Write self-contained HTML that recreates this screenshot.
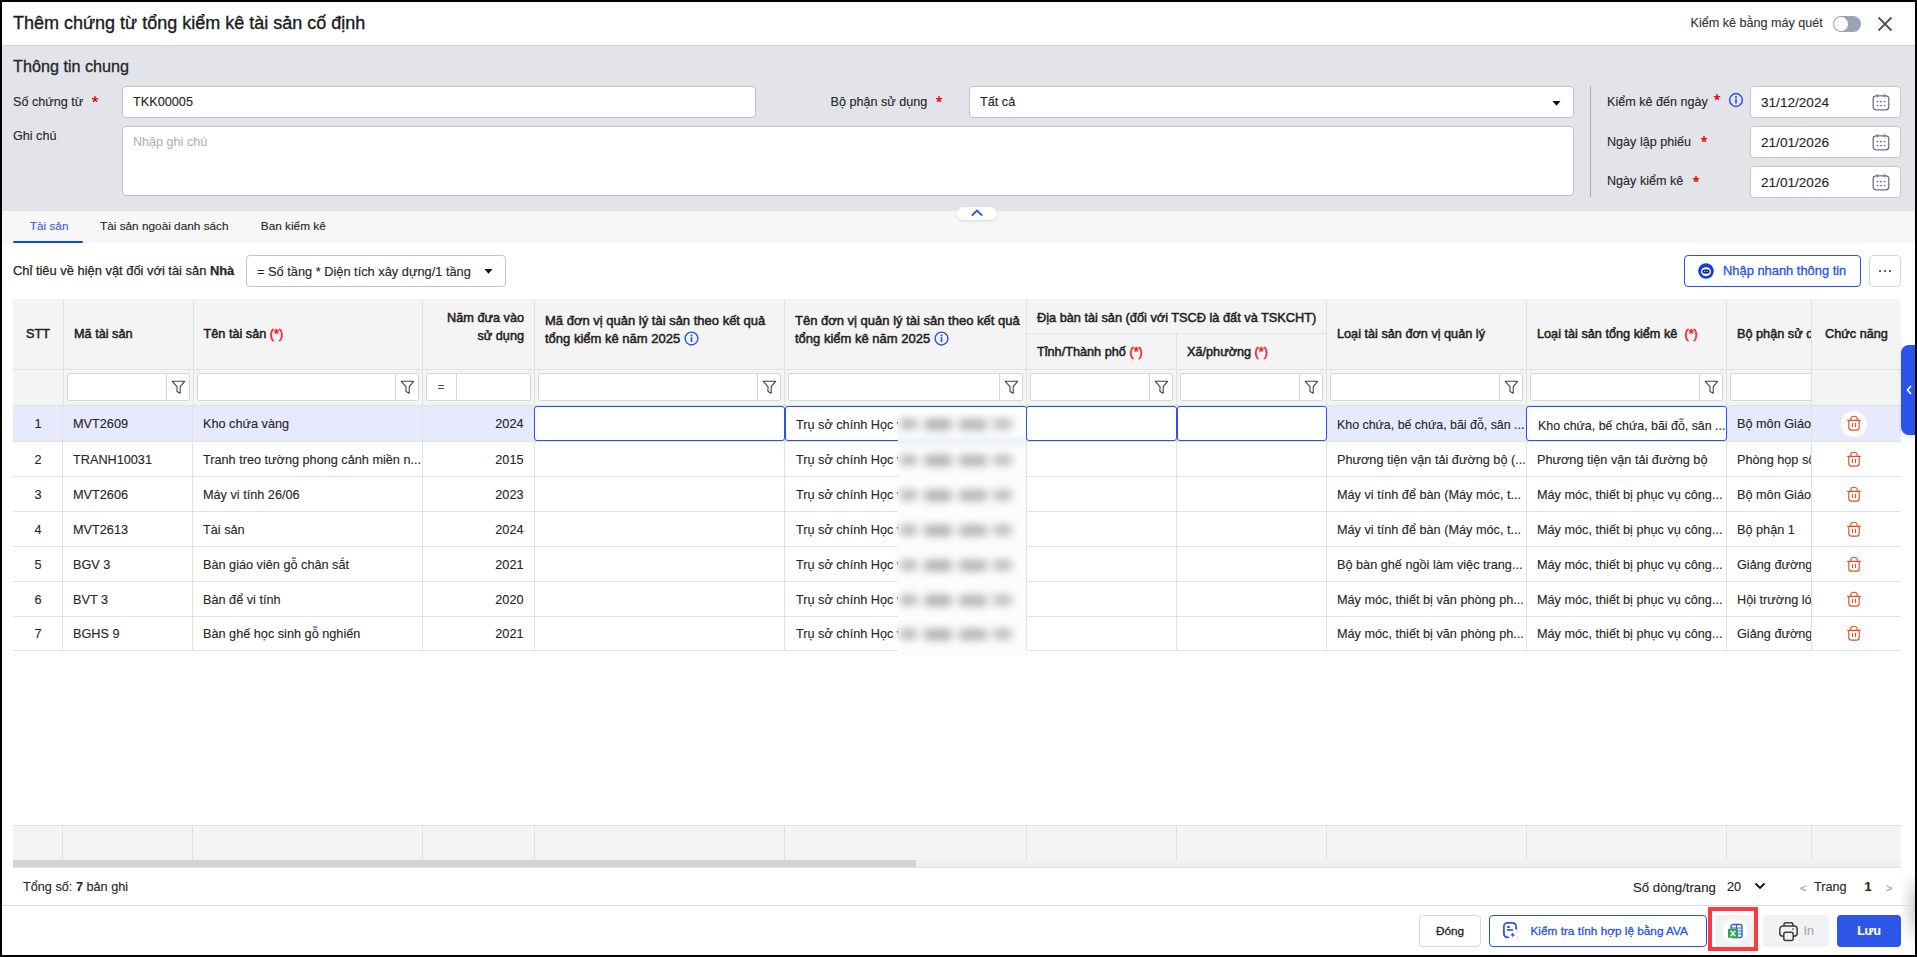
<!DOCTYPE html>
<html><head><meta charset="utf-8"><title>Thêm chứng từ tổng kiểm kê tài sản cố định</title>
<style>
html,body{margin:0;padding:0;}
body{width:1917px;height:957px;position:relative;overflow:hidden;background:#000;font-family:"Liberation Sans", sans-serif;}
.r{position:absolute;}
.t{position:absolute;white-space:pre;-webkit-text-stroke:0.12px currentColor;}
.t b{font-weight:700;}
</style></head><body>
<div class="r" style="left:2px;top:2px;width:1913px;height:953px;background:#fff;"></div>
<div class="t" style="left:13px;top:12.26px;font-size:18px;line-height:23px;color:#1c1c1c;font-weight:400;-webkit-text-stroke:0.35px #1c1c1c;">Thêm chứng từ tổng kiểm kê tài sản cố định</div>
<div class="t" style="left:1690.5px;top:14.63px;font-size:12.6px;line-height:16px;color:#333;font-weight:400;">Kiểm kê bằng máy quét</div>
<div class="r" style="left:1833px;top:16px;width:28px;height:16px;background:#9aa3b8;border-radius:8px;"></div>
<div class="r" style="left:1834px;top:17px;width:14px;height:14px;background:#fff;border-radius:50%;"></div>
<svg class="r" style="left:1876px;top:15px" width="18" height="18" viewBox="0 0 18 18"><path d="M2.5 2.5L15.5 15.5M15.5 2.5L2.5 15.5" stroke="#555" stroke-width="2" stroke-linecap="butt"/></svg>
<div class="r" style="left:2px;top:45px;width:1913px;height:166px;background:#e3e4e9;border-top:1px solid #d3d3d4;box-sizing:border-box;"></div>
<div class="t" style="left:13px;top:55.89px;font-size:16.2px;line-height:21px;color:#262626;font-weight:400;-webkit-text-stroke:0.3px #262626;">Thông tin chung</div>
<div class="t" style="left:13px;top:93.63px;font-size:12.6px;line-height:16px;color:#262626;font-weight:400;">Số chứng từ</div>
<svg class="r" style="left:89.69999999999999px;top:93.8px" width="10" height="10" viewBox="-5 -5 10 10"><path d="M0 0L0 -2.5M0 0L-2.6 -0.35M0 0L2.6 -0.35M0 0L-1.45 2.35M0 0L1.45 2.35" stroke="#ff0000" stroke-width="1.4" stroke-linecap="round"/></svg>
<div class="r" style="left:122px;top:86px;width:634px;height:32px;background:#fff;border:1px solid #c2c2c2;border-radius:4px;box-sizing:border-box;"></div>
<div class="t" style="left:133px;top:94.10px;font-size:12.7px;line-height:17px;color:#262626;font-weight:400;">TKK00005</div>
<div class="t" style="left:13px;top:127.63px;font-size:12.6px;line-height:16px;color:#262626;font-weight:400;">Ghi chú</div>
<div class="r" style="left:122px;top:126px;width:1452px;height:70px;background:#fff;border:1px solid #c2c2c2;border-radius:4px;box-sizing:border-box;"></div>
<div class="t" style="left:133px;top:134.13px;font-size:12.6px;line-height:16px;color:#b3b3b3;font-weight:400;">Nhập ghi chú</div>
<div class="t" style="left:830.5px;top:93.63px;font-size:12.6px;line-height:16px;color:#262626;font-weight:400;">Bộ phận sử dụng</div>
<svg class="r" style="left:933.6px;top:93.8px" width="10" height="10" viewBox="-5 -5 10 10"><path d="M0 0L0 -2.5M0 0L-2.6 -0.35M0 0L2.6 -0.35M0 0L-1.45 2.35M0 0L1.45 2.35" stroke="#ff0000" stroke-width="1.4" stroke-linecap="round"/></svg>
<div class="r" style="left:969px;top:86px;width:605px;height:32px;background:#fff;border:1px solid #c2c2c2;border-radius:4px;box-sizing:border-box;"></div>
<div class="t" style="left:980px;top:94.10px;font-size:12.7px;line-height:17px;color:#262626;font-weight:400;">Tất cả</div>
<svg class="r" style="left:1552px;top:100px" width="9" height="7" viewBox="0 0 9 7"><path d="M0.5 1H8.5L4.5 5.8Z" fill="#111"/></svg>
<div class="r" style="left:1590px;top:86px;width:1px;height:111px;background:#a9a9a9;"></div>
<div class="t" style="left:1607px;top:93.63px;font-size:12.6px;line-height:16px;color:#262626;font-weight:400;">Kiểm kê đến ngày</div>
<svg class="r" style="left:1712.1px;top:91.5px" width="10" height="10" viewBox="-5 -5 10 10"><path d="M0 0L0 -2.5M0 0L-2.6 -0.35M0 0L2.6 -0.35M0 0L-1.45 2.35M0 0L1.45 2.35" stroke="#ff0000" stroke-width="1.4" stroke-linecap="round"/></svg>
<svg class="r" style="left:1728px;top:92px" width="16" height="16" viewBox="0 0 16 16"><circle cx="8" cy="8" r="6.4" fill="none" stroke="#2f55e8" stroke-width="1.5"/><circle cx="8" cy="5" r="1.05" fill="#2f55e8"/><rect x="7.15" y="6.7" width="1.7" height="4.8" fill="#2f55e8"/></svg>
<div class="t" style="left:1607px;top:133.63px;font-size:12.6px;line-height:16px;color:#262626;font-weight:400;">Ngày lập phiếu</div>
<svg class="r" style="left:1699.1px;top:133.8px" width="10" height="10" viewBox="-5 -5 10 10"><path d="M0 0L0 -2.5M0 0L-2.6 -0.35M0 0L2.6 -0.35M0 0L-1.45 2.35M0 0L1.45 2.35" stroke="#ff0000" stroke-width="1.4" stroke-linecap="round"/></svg>
<div class="t" style="left:1607px;top:173.13px;font-size:12.6px;line-height:16px;color:#262626;font-weight:400;">Ngày kiểm kê</div>
<svg class="r" style="left:1691.1px;top:173.5px" width="10" height="10" viewBox="-5 -5 10 10"><path d="M0 0L0 -2.5M0 0L-2.6 -0.35M0 0L2.6 -0.35M0 0L-1.45 2.35M0 0L1.45 2.35" stroke="#ff0000" stroke-width="1.4" stroke-linecap="round"/></svg>
<div class="r" style="left:1750px;top:86px;width:151px;height:32px;background:#fff;border:1px solid #c8c8c8;border-radius:4px;box-sizing:border-box;"></div>
<div class="t" style="left:1761px;top:94.09px;font-size:13.6px;line-height:18px;color:#262626;font-weight:400;">31/12/2024</div>
<svg class="r" style="left:1871px;top:92px" width="20" height="20" viewBox="0 0 20 20"><rect x="2.2" y="3.8" width="15.6" height="14" rx="3" fill="none" stroke="#69728a" stroke-width="1.3"/><path d="M6.5 2.2V5.2M13.5 2.2V5.2" stroke="#69728a" stroke-width="1.3"/><g fill="#69728a"><rect x="5.6" y="9" width="1.8" height="1.2"/><rect x="9.1" y="9" width="1.8" height="1.2"/><rect x="12.6" y="9" width="1.8" height="1.2"/><rect x="5.6" y="13" width="1.8" height="1.2"/><rect x="9.1" y="13" width="1.8" height="1.2"/><rect x="12.6" y="13" width="1.8" height="1.2"/></g></svg>
<div class="r" style="left:1750px;top:126px;width:151px;height:32px;background:#fff;border:1px solid #c8c8c8;border-radius:4px;box-sizing:border-box;"></div>
<div class="t" style="left:1761px;top:134.09px;font-size:13.6px;line-height:18px;color:#262626;font-weight:400;">21/01/2026</div>
<svg class="r" style="left:1871px;top:132px" width="20" height="20" viewBox="0 0 20 20"><rect x="2.2" y="3.8" width="15.6" height="14" rx="3" fill="none" stroke="#69728a" stroke-width="1.3"/><path d="M6.5 2.2V5.2M13.5 2.2V5.2" stroke="#69728a" stroke-width="1.3"/><g fill="#69728a"><rect x="5.6" y="9" width="1.8" height="1.2"/><rect x="9.1" y="9" width="1.8" height="1.2"/><rect x="12.6" y="9" width="1.8" height="1.2"/><rect x="5.6" y="13" width="1.8" height="1.2"/><rect x="9.1" y="13" width="1.8" height="1.2"/><rect x="12.6" y="13" width="1.8" height="1.2"/></g></svg>
<div class="r" style="left:1750px;top:166px;width:151px;height:32px;background:#fff;border:1px solid #c8c8c8;border-radius:4px;box-sizing:border-box;"></div>
<div class="t" style="left:1761px;top:174.09px;font-size:13.6px;line-height:18px;color:#262626;font-weight:400;">21/01/2026</div>
<svg class="r" style="left:1871px;top:172px" width="20" height="20" viewBox="0 0 20 20"><rect x="2.2" y="3.8" width="15.6" height="14" rx="3" fill="none" stroke="#69728a" stroke-width="1.3"/><path d="M6.5 2.2V5.2M13.5 2.2V5.2" stroke="#69728a" stroke-width="1.3"/><g fill="#69728a"><rect x="5.6" y="9" width="1.8" height="1.2"/><rect x="9.1" y="9" width="1.8" height="1.2"/><rect x="12.6" y="9" width="1.8" height="1.2"/><rect x="5.6" y="13" width="1.8" height="1.2"/><rect x="9.1" y="13" width="1.8" height="1.2"/><rect x="12.6" y="13" width="1.8" height="1.2"/></g></svg>
<div class="r" style="left:2px;top:211px;width:1913px;height:32px;background:#f7f7f7;"></div>
<div class="t" style="left:29.8px;top:219.41px;font-size:11.8px;line-height:15px;color:#3e5cf0;font-weight:400;">Tài sản</div>
<div class="t" style="left:100px;top:219.41px;font-size:11.8px;line-height:15px;color:#262626;font-weight:400;">Tài sản ngoài danh sách</div>
<div class="t" style="left:260.8px;top:219.41px;font-size:11.8px;line-height:15px;color:#262626;font-weight:400;">Ban kiểm kê</div>
<div class="r" style="left:13px;top:241px;width:70px;height:2px;background:#1442e8;border-radius:1px;"></div>
<div class="r" style="left:957px;top:207px;width:40px;height:13px;background:#fff;border-radius:7px;box-shadow:0 1px 3px rgba(0,0,0,0.12);"></div>
<svg class="r" style="left:970px;top:208px" width="14" height="10" viewBox="0 0 14 10"><path d="M1.8 7.6L7 2.6L12.2 7.6" fill="none" stroke="#1f4fe8" stroke-width="1.8"/></svg>
<div class="t" style="left:13px;top:261.73px;font-size:12.9px;line-height:17px;color:#262626;font-weight:400;-webkit-text-stroke:0.25px #262626;">Chỉ tiêu về hiện vật đối với tài sản <b>Nhà</b></div>
<div class="r" style="left:246px;top:255px;width:260px;height:32px;background:#fff;border:1px solid #c2c2c2;border-radius:4px;box-sizing:border-box;"></div>
<div class="t" style="left:257px;top:262.76px;font-size:12.8px;line-height:17px;color:#262626;font-weight:400;">= Số tầng * Diện tích xây dựng/1 tầng</div>
<svg class="r" style="left:484px;top:268px" width="9" height="7" viewBox="0 0 9 7"><path d="M0.5 1H8.5L4.5 5.8Z" fill="#111"/></svg>
<div class="r" style="left:1684px;top:255px;width:177px;height:32px;background:#fff;border:1px solid #2a52e6;border-radius:4px;box-sizing:border-box;"></div>
<svg class="r" style="left:1698px;top:263px" width="16" height="16" viewBox="0 0 16 16"><circle cx="8" cy="8" r="7.8" fill="#0f3fe0"/><ellipse cx="8" cy="8.6" rx="5" ry="4.4" fill="#fff"/><ellipse cx="8" cy="8.5" rx="3.6" ry="2.2" fill="#0a1a6a"/><circle cx="6.7" cy="8.4" r="0.8" fill="#9fb4ff"/><circle cx="9.3" cy="8.4" r="0.8" fill="#9fb4ff"/></svg>
<div class="t" style="left:1723px;top:262.03px;font-size:12.9px;line-height:17px;color:#2a52e6;font-weight:400;-webkit-text-stroke:0.3px #2a52e6;">Nhập nhanh thông tin</div>
<div class="r" style="left:1869px;top:255px;width:32px;height:32px;background:#fff;border:1px solid #d3d6dc;border-radius:4px;box-sizing:border-box;"></div>
<div class="r" style="left:1879px;top:270px;width:2px;height:2px;background:#333;border-radius:1px;"></div>
<div class="r" style="left:1884px;top:270px;width:2px;height:2px;background:#333;border-radius:1px;"></div>
<div class="r" style="left:1889px;top:270px;width:2px;height:2px;background:#333;border-radius:1px;"></div>
<div class="r" style="left:13px;top:299px;width:1888px;height:106px;background:#f4f4f4;"></div>
<div class="r" style="left:13px;top:369px;width:1888px;height:1px;background:#e1e1e1;"></div>
<div class="r" style="left:13px;top:405px;width:1888px;height:1px;background:#e1e1e1;"></div>
<div class="r" style="left:1026px;top:333px;width:301px;height:1px;background:#e1e1e1;"></div>
<div class="r" style="left:63px;top:299px;width:1px;height:106px;background:#e1e1e1;"></div>
<div class="r" style="left:193px;top:299px;width:1px;height:106px;background:#e1e1e1;"></div>
<div class="r" style="left:422px;top:299px;width:1px;height:106px;background:#e1e1e1;"></div>
<div class="r" style="left:534px;top:299px;width:1px;height:106px;background:#e1e1e1;"></div>
<div class="r" style="left:784px;top:299px;width:1px;height:106px;background:#e1e1e1;"></div>
<div class="r" style="left:1026px;top:299px;width:1px;height:106px;background:#e1e1e1;"></div>
<div class="r" style="left:1176px;top:334px;width:1px;height:71px;background:#e1e1e1;"></div>
<div class="r" style="left:1326px;top:299px;width:1px;height:106px;background:#e1e1e1;"></div>
<div class="r" style="left:1526px;top:299px;width:1px;height:106px;background:#e1e1e1;"></div>
<div class="r" style="left:1726px;top:299px;width:1px;height:106px;background:#e1e1e1;"></div>
<div class="r" style="left:1811px;top:299px;width:1px;height:106px;background:#e1e1e1;"></div>
<div class="t" style="left:-262px;width:600px;text-align:center;top:326.30px;font-size:12.7px;line-height:17px;color:#222;font-weight:400;-webkit-text-stroke:0.5px #222;">STT</div>
<div class="t" style="left:74px;top:326.30px;font-size:12.7px;line-height:17px;color:#222;font-weight:400;-webkit-text-stroke:0.5px #222;">Mã tài sản</div>
<div class="t" style="left:203.5px;top:326.30px;font-size:12.7px;line-height:17px;color:#222;font-weight:400;-webkit-text-stroke:0.5px #222;">Tên tài sản <span style="color:#f0141e;-webkit-text-stroke-color:#f0141e">(*)</span></div>
<div class="t" style="left:-76px;width:600px;text-align:right;top:309.90px;font-size:12.7px;line-height:17px;color:#222;font-weight:400;-webkit-text-stroke:0.5px #222;">Năm đưa vào</div>
<div class="t" style="left:-76px;width:600px;text-align:right;top:327.90px;font-size:12.7px;line-height:17px;color:#222;font-weight:400;-webkit-text-stroke:0.5px #222;">sử dụng</div>
<div class="t" style="left:545px;top:311.50px;font-size:13px;line-height:17px;color:#222;font-weight:400;-webkit-text-stroke:0.5px #222;">Mã đơn vị quản lý tài sản theo kết quả</div>
<div class="t" style="left:545px;top:329.80px;font-size:13px;line-height:17px;color:#222;font-weight:400;-webkit-text-stroke:0.5px #222;">tổng kiểm kê năm 2025<svg style="display:inline-block;vertical-align:-3px;margin-left:4px;-webkit-text-stroke:0" width="15" height="15" viewBox="0 0 15 15"><circle cx="7.5" cy="7.5" r="6.4" fill="none" stroke="#2f55e8" stroke-width="1.45"/><circle cx="7.5" cy="4.5" r="1.05" fill="#2f55e8"/><rect x="6.65" y="6.2" width="1.7" height="4.8" fill="#2f55e8"/></svg></div>
<div class="t" style="left:795px;top:311.50px;font-size:13px;line-height:17px;color:#222;font-weight:400;-webkit-text-stroke:0.5px #222;">Tên đơn vị quản lý tài sản theo kết quả</div>
<div class="t" style="left:795px;top:329.80px;font-size:13px;line-height:17px;color:#222;font-weight:400;-webkit-text-stroke:0.5px #222;">tổng kiểm kê năm 2025<svg style="display:inline-block;vertical-align:-3px;margin-left:4px;-webkit-text-stroke:0" width="15" height="15" viewBox="0 0 15 15"><circle cx="7.5" cy="7.5" r="6.4" fill="none" stroke="#2f55e8" stroke-width="1.45"/><circle cx="7.5" cy="4.5" r="1.05" fill="#2f55e8"/><rect x="6.65" y="6.2" width="1.7" height="4.8" fill="#2f55e8"/></svg></div>
<div class="t" style="left:1037px;top:308.58px;font-size:12.75px;line-height:17px;color:#222;font-weight:400;-webkit-text-stroke:0.5px #222;">Địa bàn tài sản (đối với TSCĐ là đất và TSKCHT)</div>
<div class="t" style="left:1037px;top:343.90px;font-size:12.7px;line-height:17px;color:#222;font-weight:400;-webkit-text-stroke:0.5px #222;">Tỉnh/Thành phố <span style="color:#f0141e;-webkit-text-stroke-color:#f0141e">(*)</span></div>
<div class="t" style="left:1187px;top:343.90px;font-size:12.7px;line-height:17px;color:#222;font-weight:400;-webkit-text-stroke:0.5px #222;">Xã/phường <span style="color:#f0141e;-webkit-text-stroke-color:#f0141e">(*)</span></div>
<div class="t" style="left:1337px;top:325.90px;font-size:12.7px;line-height:17px;color:#222;font-weight:400;-webkit-text-stroke:0.5px #222;">Loại tài sản đơn vị quản lý</div>
<div class="t" style="left:1537px;top:325.90px;font-size:12.7px;line-height:17px;color:#222;font-weight:400;-webkit-text-stroke:0.5px #222;">Loại tài sản tổng kiểm kê &nbsp;<span style="color:#f0141e;-webkit-text-stroke-color:#f0141e">(*)</span></div>
<div class="t" style="left:1737px;width:74px;overflow:hidden;top:325.90px;font-size:12.7px;line-height:17px;color:#222;font-weight:400;-webkit-text-stroke:0.5px #222;white-space:nowrap;">Bộ phận sử dụng</div>
<div class="t" style="left:1556.5px;width:600px;text-align:center;top:325.90px;font-size:12.7px;line-height:17px;color:#222;font-weight:400;-webkit-text-stroke:0.5px #222;">Chức năng</div>
<div class="r" style="left:67px;top:373px;width:123px;height:28px;background:#fff;border:1px solid #d6d6d6;border-radius:2px;box-sizing:border-box;"></div>
<div class="r" style="left:166px;top:373px;width:1px;height:28px;background:#d6d6d6;"></div>
<svg class="r" style="left:170.5px;top:380px" width="15" height="15" viewBox="0 0 15 15"><path d="M1.2 1.3H13.6L9.2 6.6V13.2L6 11.4V6.6Z" fill="none" stroke="#444" stroke-width="1.1" stroke-linejoin="round"/></svg>
<div class="r" style="left:197px;top:373px;width:222px;height:28px;background:#fff;border:1px solid #d6d6d6;border-radius:2px;box-sizing:border-box;"></div>
<div class="r" style="left:395px;top:373px;width:1px;height:28px;background:#d6d6d6;"></div>
<svg class="r" style="left:399.5px;top:380px" width="15" height="15" viewBox="0 0 15 15"><path d="M1.2 1.3H13.6L9.2 6.6V13.2L6 11.4V6.6Z" fill="none" stroke="#444" stroke-width="1.1" stroke-linejoin="round"/></svg>
<div class="r" style="left:426px;top:373px;width:105px;height:28px;background:#fff;border:1px solid #d6d6d6;border-radius:2px;box-sizing:border-box;"></div>
<div class="r" style="left:456px;top:373px;width:1px;height:28px;background:#d6d6d6;"></div>
<div class="t" style="left:141px;width:600px;text-align:center;top:380.19px;font-size:11px;line-height:14px;color:#444;font-weight:400;">=</div>
<div class="r" style="left:538px;top:373px;width:243px;height:28px;background:#fff;border:1px solid #d6d6d6;border-radius:2px;box-sizing:border-box;"></div>
<div class="r" style="left:757px;top:373px;width:1px;height:28px;background:#d6d6d6;"></div>
<svg class="r" style="left:761.5px;top:380px" width="15" height="15" viewBox="0 0 15 15"><path d="M1.2 1.3H13.6L9.2 6.6V13.2L6 11.4V6.6Z" fill="none" stroke="#444" stroke-width="1.1" stroke-linejoin="round"/></svg>
<div class="r" style="left:788px;top:373px;width:235px;height:28px;background:#fff;border:1px solid #d6d6d6;border-radius:2px;box-sizing:border-box;"></div>
<div class="r" style="left:999px;top:373px;width:1px;height:28px;background:#d6d6d6;"></div>
<svg class="r" style="left:1003.5px;top:380px" width="15" height="15" viewBox="0 0 15 15"><path d="M1.2 1.3H13.6L9.2 6.6V13.2L6 11.4V6.6Z" fill="none" stroke="#444" stroke-width="1.1" stroke-linejoin="round"/></svg>
<div class="r" style="left:1030px;top:373px;width:143px;height:28px;background:#fff;border:1px solid #d6d6d6;border-radius:2px;box-sizing:border-box;"></div>
<div class="r" style="left:1149px;top:373px;width:1px;height:28px;background:#d6d6d6;"></div>
<svg class="r" style="left:1153.5px;top:380px" width="15" height="15" viewBox="0 0 15 15"><path d="M1.2 1.3H13.6L9.2 6.6V13.2L6 11.4V6.6Z" fill="none" stroke="#444" stroke-width="1.1" stroke-linejoin="round"/></svg>
<div class="r" style="left:1180px;top:373px;width:143px;height:28px;background:#fff;border:1px solid #d6d6d6;border-radius:2px;box-sizing:border-box;"></div>
<div class="r" style="left:1299px;top:373px;width:1px;height:28px;background:#d6d6d6;"></div>
<svg class="r" style="left:1303.5px;top:380px" width="15" height="15" viewBox="0 0 15 15"><path d="M1.2 1.3H13.6L9.2 6.6V13.2L6 11.4V6.6Z" fill="none" stroke="#444" stroke-width="1.1" stroke-linejoin="round"/></svg>
<div class="r" style="left:1330px;top:373px;width:193px;height:28px;background:#fff;border:1px solid #d6d6d6;border-radius:2px;box-sizing:border-box;"></div>
<div class="r" style="left:1499px;top:373px;width:1px;height:28px;background:#d6d6d6;"></div>
<svg class="r" style="left:1503.5px;top:380px" width="15" height="15" viewBox="0 0 15 15"><path d="M1.2 1.3H13.6L9.2 6.6V13.2L6 11.4V6.6Z" fill="none" stroke="#444" stroke-width="1.1" stroke-linejoin="round"/></svg>
<div class="r" style="left:1530px;top:373px;width:193px;height:28px;background:#fff;border:1px solid #d6d6d6;border-radius:2px;box-sizing:border-box;"></div>
<div class="r" style="left:1699px;top:373px;width:1px;height:28px;background:#d6d6d6;"></div>
<svg class="r" style="left:1703.5px;top:380px" width="15" height="15" viewBox="0 0 15 15"><path d="M1.2 1.3H13.6L9.2 6.6V13.2L6 11.4V6.6Z" fill="none" stroke="#444" stroke-width="1.1" stroke-linejoin="round"/></svg>
<div class="r" style="left:1730px;top:373px;width:81px;height:28px;background:#fff;border:1px solid #d6d6d6;border-right:none;border-radius:2px 0 0 2px;box-sizing:border-box;"></div>
<div class="r" style="left:13px;top:406px;width:1888px;height:35px;background:#e7eafc;"></div>
<div class="r" style="left:13px;top:441px;width:1888px;height:1px;background:#e1e1e1;"></div>
<div class="r" style="left:62px;top:406px;width:1px;height:35px;background:#e1e1e1;"></div>
<div class="r" style="left:192px;top:406px;width:1px;height:35px;background:#e1e1e1;"></div>
<div class="r" style="left:422px;top:406px;width:1px;height:35px;background:#e1e1e1;"></div>
<div class="r" style="left:534px;top:406px;width:1px;height:35px;background:#e1e1e1;"></div>
<div class="r" style="left:784px;top:406px;width:1px;height:35px;background:#e1e1e1;"></div>
<div class="r" style="left:1026px;top:406px;width:1px;height:35px;background:#e1e1e1;"></div>
<div class="r" style="left:1176px;top:406px;width:1px;height:35px;background:#e1e1e1;"></div>
<div class="r" style="left:1326px;top:406px;width:1px;height:35px;background:#e1e1e1;"></div>
<div class="r" style="left:1526px;top:406px;width:1px;height:35px;background:#e1e1e1;"></div>
<div class="r" style="left:1726px;top:406px;width:1px;height:35px;background:#e1e1e1;"></div>
<div class="r" style="left:1811px;top:406px;width:1px;height:35px;background:#e1e1e1;"></div>
<div class="r" style="left:534px;top:406px;width:251px;height:35px;border:1.5px solid #2a52e6;border-radius:3px;box-sizing:border-box;background:#fff;"></div>
<div class="r" style="left:785px;top:406px;width:242px;height:35px;border:1.5px solid #2a52e6;border-radius:3px;box-sizing:border-box;background:#fff;"></div>
<div class="r" style="left:1026px;top:406px;width:151px;height:35px;border:1.5px solid #2a52e6;border-radius:3px;box-sizing:border-box;background:#fff;"></div>
<div class="r" style="left:1177px;top:406px;width:150px;height:35px;border:1.5px solid #2a52e6;border-radius:3px;box-sizing:border-box;background:#fff;"></div>
<div class="r" style="left:1526px;top:406px;width:201px;height:35px;border:1.5px solid #2a52e6;border-radius:3px;box-sizing:border-box;background:#fff;"></div>
<div class="t" style="left:-262px;width:600px;text-align:center;top:416.30px;font-size:12.7px;line-height:17px;color:#262626;font-weight:400;">1</div>
<div class="t" style="left:73px;top:416.30px;font-size:12.7px;line-height:17px;color:#262626;font-weight:400;">MVT2609</div>
<div class="t" style="left:203px;top:416.30px;font-size:12.7px;line-height:17px;color:#262626;font-weight:400;">Kho chứa vàng</div>
<div class="t" style="left:-76.5px;width:600px;text-align:right;top:416.30px;font-size:12.7px;line-height:17px;color:#262626;font-weight:400;">2024</div>
<div class="t" style="left:796px;top:417.10px;font-size:12.7px;line-height:17px;color:#262626;font-weight:400;">Trụ sở chính Học v</div>
<div class="t" style="left:1337px;top:416.90px;font-size:12.4px;line-height:16px;color:#262626;font-weight:400;">Kho chứa, bế chứa, bãi đỗ, sân ...</div>
<div class="t" style="left:1538px;top:417.70px;font-size:12.4px;line-height:16px;color:#262626;font-weight:400;">Kho chứa, bế chứa, bãi đỗ, sân ...</div>
<div class="t" style="left:1737px;width:74px;overflow:hidden;top:416.30px;font-size:12.7px;line-height:17px;color:#262626;font-weight:400;white-space:nowrap;">Bộ môn Giáo dục</div>
<div class="r" style="left:1841px;top:411px;width:26px;height:26px;background:#fff;border-radius:50%;"></div>
<svg class="r" style="left:1845px;top:414.2px" width="18" height="18" viewBox="0 0 18 18"><g fill="none" stroke="#e24e25"><path d="M5.7 6.4V5.2A3 3 0 0 1 8.7 2.2H9.3A3 3 0 0 1 12.3 5.2V6.4" stroke-width="1.15"/><path d="M2.2 6.4H15.8" stroke-width="1.3"/><path d="M3.8 6.4V13.5A2.6 2.6 0 0 0 6.4 16.1H11.6A2.6 2.6 0 0 0 14.2 13.5V6.4" stroke-width="1.15"/><path d="M7.5 9.3V12.5M10.5 9.3V12.5" stroke-width="1.15" stroke-linecap="round"/></g></svg>
<div class="r" style="left:13px;top:476px;width:1888px;height:1px;background:#e1e1e1;"></div>
<div class="r" style="left:62px;top:442px;width:1px;height:34px;background:#e1e1e1;"></div>
<div class="r" style="left:192px;top:442px;width:1px;height:34px;background:#e1e1e1;"></div>
<div class="r" style="left:422px;top:442px;width:1px;height:34px;background:#e1e1e1;"></div>
<div class="r" style="left:534px;top:442px;width:1px;height:34px;background:#e1e1e1;"></div>
<div class="r" style="left:784px;top:442px;width:1px;height:34px;background:#e1e1e1;"></div>
<div class="r" style="left:1026px;top:442px;width:1px;height:34px;background:#e1e1e1;"></div>
<div class="r" style="left:1176px;top:442px;width:1px;height:34px;background:#e1e1e1;"></div>
<div class="r" style="left:1326px;top:442px;width:1px;height:34px;background:#e1e1e1;"></div>
<div class="r" style="left:1526px;top:442px;width:1px;height:34px;background:#e1e1e1;"></div>
<div class="r" style="left:1726px;top:442px;width:1px;height:34px;background:#e1e1e1;"></div>
<div class="r" style="left:1811px;top:442px;width:1px;height:34px;background:#e1e1e1;"></div>
<div class="t" style="left:-262px;width:600px;text-align:center;top:451.60px;font-size:12.7px;line-height:17px;color:#262626;font-weight:400;">2</div>
<div class="t" style="left:73px;top:451.60px;font-size:12.7px;line-height:17px;color:#262626;font-weight:400;">TRANH10031</div>
<div class="t" style="left:203px;top:451.60px;font-size:12.7px;line-height:17px;color:#262626;font-weight:400;">Tranh treo tường phong cảnh miền n...</div>
<div class="t" style="left:-76.5px;width:600px;text-align:right;top:451.60px;font-size:12.7px;line-height:17px;color:#262626;font-weight:400;">2015</div>
<div class="t" style="left:796px;top:451.60px;font-size:12.7px;line-height:17px;color:#262626;font-weight:400;">Trụ sở chính Học v</div>
<div class="t" style="left:1337px;top:451.60px;font-size:12.7px;line-height:17px;color:#262626;font-weight:400;">Phương tiện vận tải đường bộ (...</div>
<div class="t" style="left:1537px;top:451.60px;font-size:12.7px;line-height:17px;color:#262626;font-weight:400;">Phương tiện vận tải đường bộ</div>
<div class="t" style="left:1737px;width:74px;overflow:hidden;top:451.60px;font-size:12.7px;line-height:17px;color:#262626;font-weight:400;white-space:nowrap;">Phòng họp số 1</div>
<svg class="r" style="left:1845px;top:450px" width="18" height="18" viewBox="0 0 18 18"><g fill="none" stroke="#e24e25"><path d="M5.7 6.4V5.2A3 3 0 0 1 8.7 2.2H9.3A3 3 0 0 1 12.3 5.2V6.4" stroke-width="1.15"/><path d="M2.2 6.4H15.8" stroke-width="1.3"/><path d="M3.8 6.4V13.5A2.6 2.6 0 0 0 6.4 16.1H11.6A2.6 2.6 0 0 0 14.2 13.5V6.4" stroke-width="1.15"/><path d="M7.5 9.3V12.5M10.5 9.3V12.5" stroke-width="1.15" stroke-linecap="round"/></g></svg>
<div class="r" style="left:13px;top:511px;width:1888px;height:1px;background:#e1e1e1;"></div>
<div class="r" style="left:62px;top:477px;width:1px;height:34px;background:#e1e1e1;"></div>
<div class="r" style="left:192px;top:477px;width:1px;height:34px;background:#e1e1e1;"></div>
<div class="r" style="left:422px;top:477px;width:1px;height:34px;background:#e1e1e1;"></div>
<div class="r" style="left:534px;top:477px;width:1px;height:34px;background:#e1e1e1;"></div>
<div class="r" style="left:784px;top:477px;width:1px;height:34px;background:#e1e1e1;"></div>
<div class="r" style="left:1026px;top:477px;width:1px;height:34px;background:#e1e1e1;"></div>
<div class="r" style="left:1176px;top:477px;width:1px;height:34px;background:#e1e1e1;"></div>
<div class="r" style="left:1326px;top:477px;width:1px;height:34px;background:#e1e1e1;"></div>
<div class="r" style="left:1526px;top:477px;width:1px;height:34px;background:#e1e1e1;"></div>
<div class="r" style="left:1726px;top:477px;width:1px;height:34px;background:#e1e1e1;"></div>
<div class="r" style="left:1811px;top:477px;width:1px;height:34px;background:#e1e1e1;"></div>
<div class="t" style="left:-262px;width:600px;text-align:center;top:486.60px;font-size:12.7px;line-height:17px;color:#262626;font-weight:400;">3</div>
<div class="t" style="left:73px;top:486.60px;font-size:12.7px;line-height:17px;color:#262626;font-weight:400;">MVT2606</div>
<div class="t" style="left:203px;top:486.60px;font-size:12.7px;line-height:17px;color:#262626;font-weight:400;">Máy vi tính 26/06</div>
<div class="t" style="left:-76.5px;width:600px;text-align:right;top:486.60px;font-size:12.7px;line-height:17px;color:#262626;font-weight:400;">2023</div>
<div class="t" style="left:796px;top:486.60px;font-size:12.7px;line-height:17px;color:#262626;font-weight:400;">Trụ sở chính Học v</div>
<div class="t" style="left:1337px;top:486.60px;font-size:12.7px;line-height:17px;color:#262626;font-weight:400;">Máy vi tính để bàn (Máy móc, t...</div>
<div class="t" style="left:1537px;top:486.60px;font-size:12.7px;line-height:17px;color:#262626;font-weight:400;">Máy móc, thiết bị phục vụ công...</div>
<div class="t" style="left:1737px;width:74px;overflow:hidden;top:486.60px;font-size:12.7px;line-height:17px;color:#262626;font-weight:400;white-space:nowrap;">Bộ môn Giáo dục</div>
<svg class="r" style="left:1845px;top:485px" width="18" height="18" viewBox="0 0 18 18"><g fill="none" stroke="#e24e25"><path d="M5.7 6.4V5.2A3 3 0 0 1 8.7 2.2H9.3A3 3 0 0 1 12.3 5.2V6.4" stroke-width="1.15"/><path d="M2.2 6.4H15.8" stroke-width="1.3"/><path d="M3.8 6.4V13.5A2.6 2.6 0 0 0 6.4 16.1H11.6A2.6 2.6 0 0 0 14.2 13.5V6.4" stroke-width="1.15"/><path d="M7.5 9.3V12.5M10.5 9.3V12.5" stroke-width="1.15" stroke-linecap="round"/></g></svg>
<div class="r" style="left:13px;top:546px;width:1888px;height:1px;background:#e1e1e1;"></div>
<div class="r" style="left:62px;top:512px;width:1px;height:34px;background:#e1e1e1;"></div>
<div class="r" style="left:192px;top:512px;width:1px;height:34px;background:#e1e1e1;"></div>
<div class="r" style="left:422px;top:512px;width:1px;height:34px;background:#e1e1e1;"></div>
<div class="r" style="left:534px;top:512px;width:1px;height:34px;background:#e1e1e1;"></div>
<div class="r" style="left:784px;top:512px;width:1px;height:34px;background:#e1e1e1;"></div>
<div class="r" style="left:1026px;top:512px;width:1px;height:34px;background:#e1e1e1;"></div>
<div class="r" style="left:1176px;top:512px;width:1px;height:34px;background:#e1e1e1;"></div>
<div class="r" style="left:1326px;top:512px;width:1px;height:34px;background:#e1e1e1;"></div>
<div class="r" style="left:1526px;top:512px;width:1px;height:34px;background:#e1e1e1;"></div>
<div class="r" style="left:1726px;top:512px;width:1px;height:34px;background:#e1e1e1;"></div>
<div class="r" style="left:1811px;top:512px;width:1px;height:34px;background:#e1e1e1;"></div>
<div class="t" style="left:-262px;width:600px;text-align:center;top:521.60px;font-size:12.7px;line-height:17px;color:#262626;font-weight:400;">4</div>
<div class="t" style="left:73px;top:521.60px;font-size:12.7px;line-height:17px;color:#262626;font-weight:400;">MVT2613</div>
<div class="t" style="left:203px;top:521.60px;font-size:12.7px;line-height:17px;color:#262626;font-weight:400;">Tài sản</div>
<div class="t" style="left:-76.5px;width:600px;text-align:right;top:521.60px;font-size:12.7px;line-height:17px;color:#262626;font-weight:400;">2024</div>
<div class="t" style="left:796px;top:521.60px;font-size:12.7px;line-height:17px;color:#262626;font-weight:400;">Trụ sở chính Học v</div>
<div class="t" style="left:1337px;top:521.60px;font-size:12.7px;line-height:17px;color:#262626;font-weight:400;">Máy vi tính để bàn (Máy móc, t...</div>
<div class="t" style="left:1537px;top:521.60px;font-size:12.7px;line-height:17px;color:#262626;font-weight:400;">Máy móc, thiết bị phục vụ công...</div>
<div class="t" style="left:1737px;width:74px;overflow:hidden;top:521.60px;font-size:12.7px;line-height:17px;color:#262626;font-weight:400;white-space:nowrap;">Bộ phận 1</div>
<svg class="r" style="left:1845px;top:520px" width="18" height="18" viewBox="0 0 18 18"><g fill="none" stroke="#e24e25"><path d="M5.7 6.4V5.2A3 3 0 0 1 8.7 2.2H9.3A3 3 0 0 1 12.3 5.2V6.4" stroke-width="1.15"/><path d="M2.2 6.4H15.8" stroke-width="1.3"/><path d="M3.8 6.4V13.5A2.6 2.6 0 0 0 6.4 16.1H11.6A2.6 2.6 0 0 0 14.2 13.5V6.4" stroke-width="1.15"/><path d="M7.5 9.3V12.5M10.5 9.3V12.5" stroke-width="1.15" stroke-linecap="round"/></g></svg>
<div class="r" style="left:13px;top:581px;width:1888px;height:1px;background:#e1e1e1;"></div>
<div class="r" style="left:62px;top:547px;width:1px;height:34px;background:#e1e1e1;"></div>
<div class="r" style="left:192px;top:547px;width:1px;height:34px;background:#e1e1e1;"></div>
<div class="r" style="left:422px;top:547px;width:1px;height:34px;background:#e1e1e1;"></div>
<div class="r" style="left:534px;top:547px;width:1px;height:34px;background:#e1e1e1;"></div>
<div class="r" style="left:784px;top:547px;width:1px;height:34px;background:#e1e1e1;"></div>
<div class="r" style="left:1026px;top:547px;width:1px;height:34px;background:#e1e1e1;"></div>
<div class="r" style="left:1176px;top:547px;width:1px;height:34px;background:#e1e1e1;"></div>
<div class="r" style="left:1326px;top:547px;width:1px;height:34px;background:#e1e1e1;"></div>
<div class="r" style="left:1526px;top:547px;width:1px;height:34px;background:#e1e1e1;"></div>
<div class="r" style="left:1726px;top:547px;width:1px;height:34px;background:#e1e1e1;"></div>
<div class="r" style="left:1811px;top:547px;width:1px;height:34px;background:#e1e1e1;"></div>
<div class="t" style="left:-262px;width:600px;text-align:center;top:556.60px;font-size:12.7px;line-height:17px;color:#262626;font-weight:400;">5</div>
<div class="t" style="left:73px;top:556.60px;font-size:12.7px;line-height:17px;color:#262626;font-weight:400;">BGV 3</div>
<div class="t" style="left:203px;top:556.60px;font-size:12.7px;line-height:17px;color:#262626;font-weight:400;">Bàn giáo viên gỗ chân sắt</div>
<div class="t" style="left:-76.5px;width:600px;text-align:right;top:556.60px;font-size:12.7px;line-height:17px;color:#262626;font-weight:400;">2021</div>
<div class="t" style="left:796px;top:556.60px;font-size:12.7px;line-height:17px;color:#262626;font-weight:400;">Trụ sở chính Học v</div>
<div class="t" style="left:1337px;top:556.60px;font-size:12.7px;line-height:17px;color:#262626;font-weight:400;">Bộ bàn ghế ngồi làm việc trang...</div>
<div class="t" style="left:1537px;top:556.60px;font-size:12.7px;line-height:17px;color:#262626;font-weight:400;">Máy móc, thiết bị phục vụ công...</div>
<div class="t" style="left:1737px;width:74px;overflow:hidden;top:556.60px;font-size:12.7px;line-height:17px;color:#262626;font-weight:400;white-space:nowrap;">Giảng đường A</div>
<svg class="r" style="left:1845px;top:555px" width="18" height="18" viewBox="0 0 18 18"><g fill="none" stroke="#e24e25"><path d="M5.7 6.4V5.2A3 3 0 0 1 8.7 2.2H9.3A3 3 0 0 1 12.3 5.2V6.4" stroke-width="1.15"/><path d="M2.2 6.4H15.8" stroke-width="1.3"/><path d="M3.8 6.4V13.5A2.6 2.6 0 0 0 6.4 16.1H11.6A2.6 2.6 0 0 0 14.2 13.5V6.4" stroke-width="1.15"/><path d="M7.5 9.3V12.5M10.5 9.3V12.5" stroke-width="1.15" stroke-linecap="round"/></g></svg>
<div class="r" style="left:13px;top:616px;width:1888px;height:1px;background:#e1e1e1;"></div>
<div class="r" style="left:62px;top:582px;width:1px;height:34px;background:#e1e1e1;"></div>
<div class="r" style="left:192px;top:582px;width:1px;height:34px;background:#e1e1e1;"></div>
<div class="r" style="left:422px;top:582px;width:1px;height:34px;background:#e1e1e1;"></div>
<div class="r" style="left:534px;top:582px;width:1px;height:34px;background:#e1e1e1;"></div>
<div class="r" style="left:784px;top:582px;width:1px;height:34px;background:#e1e1e1;"></div>
<div class="r" style="left:1026px;top:582px;width:1px;height:34px;background:#e1e1e1;"></div>
<div class="r" style="left:1176px;top:582px;width:1px;height:34px;background:#e1e1e1;"></div>
<div class="r" style="left:1326px;top:582px;width:1px;height:34px;background:#e1e1e1;"></div>
<div class="r" style="left:1526px;top:582px;width:1px;height:34px;background:#e1e1e1;"></div>
<div class="r" style="left:1726px;top:582px;width:1px;height:34px;background:#e1e1e1;"></div>
<div class="r" style="left:1811px;top:582px;width:1px;height:34px;background:#e1e1e1;"></div>
<div class="t" style="left:-262px;width:600px;text-align:center;top:591.60px;font-size:12.7px;line-height:17px;color:#262626;font-weight:400;">6</div>
<div class="t" style="left:73px;top:591.60px;font-size:12.7px;line-height:17px;color:#262626;font-weight:400;">BVT 3</div>
<div class="t" style="left:203px;top:591.60px;font-size:12.7px;line-height:17px;color:#262626;font-weight:400;">Bàn để vi tính</div>
<div class="t" style="left:-76.5px;width:600px;text-align:right;top:591.60px;font-size:12.7px;line-height:17px;color:#262626;font-weight:400;">2020</div>
<div class="t" style="left:796px;top:591.60px;font-size:12.7px;line-height:17px;color:#262626;font-weight:400;">Trụ sở chính Học v</div>
<div class="t" style="left:1337px;top:591.60px;font-size:12.7px;line-height:17px;color:#262626;font-weight:400;">Máy móc, thiết bị văn phòng ph...</div>
<div class="t" style="left:1537px;top:591.60px;font-size:12.7px;line-height:17px;color:#262626;font-weight:400;">Máy móc, thiết bị phục vụ công...</div>
<div class="t" style="left:1737px;width:74px;overflow:hidden;top:591.60px;font-size:12.7px;line-height:17px;color:#262626;font-weight:400;white-space:nowrap;">Hội trường lớn</div>
<svg class="r" style="left:1845px;top:590px" width="18" height="18" viewBox="0 0 18 18"><g fill="none" stroke="#e24e25"><path d="M5.7 6.4V5.2A3 3 0 0 1 8.7 2.2H9.3A3 3 0 0 1 12.3 5.2V6.4" stroke-width="1.15"/><path d="M2.2 6.4H15.8" stroke-width="1.3"/><path d="M3.8 6.4V13.5A2.6 2.6 0 0 0 6.4 16.1H11.6A2.6 2.6 0 0 0 14.2 13.5V6.4" stroke-width="1.15"/><path d="M7.5 9.3V12.5M10.5 9.3V12.5" stroke-width="1.15" stroke-linecap="round"/></g></svg>
<div class="r" style="left:13px;top:650px;width:1888px;height:1px;background:#e1e1e1;"></div>
<div class="r" style="left:62px;top:617px;width:1px;height:33px;background:#e1e1e1;"></div>
<div class="r" style="left:192px;top:617px;width:1px;height:33px;background:#e1e1e1;"></div>
<div class="r" style="left:422px;top:617px;width:1px;height:33px;background:#e1e1e1;"></div>
<div class="r" style="left:534px;top:617px;width:1px;height:33px;background:#e1e1e1;"></div>
<div class="r" style="left:784px;top:617px;width:1px;height:33px;background:#e1e1e1;"></div>
<div class="r" style="left:1026px;top:617px;width:1px;height:33px;background:#e1e1e1;"></div>
<div class="r" style="left:1176px;top:617px;width:1px;height:33px;background:#e1e1e1;"></div>
<div class="r" style="left:1326px;top:617px;width:1px;height:33px;background:#e1e1e1;"></div>
<div class="r" style="left:1526px;top:617px;width:1px;height:33px;background:#e1e1e1;"></div>
<div class="r" style="left:1726px;top:617px;width:1px;height:33px;background:#e1e1e1;"></div>
<div class="r" style="left:1811px;top:617px;width:1px;height:33px;background:#e1e1e1;"></div>
<div class="t" style="left:-262px;width:600px;text-align:center;top:625.60px;font-size:12.7px;line-height:17px;color:#262626;font-weight:400;">7</div>
<div class="t" style="left:73px;top:625.60px;font-size:12.7px;line-height:17px;color:#262626;font-weight:400;">BGHS 9</div>
<div class="t" style="left:203px;top:625.60px;font-size:12.7px;line-height:17px;color:#262626;font-weight:400;">Bàn ghế học sinh gỗ nghiến</div>
<div class="t" style="left:-76.5px;width:600px;text-align:right;top:625.60px;font-size:12.7px;line-height:17px;color:#262626;font-weight:400;">2021</div>
<div class="t" style="left:796px;top:625.60px;font-size:12.7px;line-height:17px;color:#262626;font-weight:400;">Trụ sở chính Học v</div>
<div class="t" style="left:1337px;top:625.60px;font-size:12.7px;line-height:17px;color:#262626;font-weight:400;">Máy móc, thiết bị văn phòng ph...</div>
<div class="t" style="left:1537px;top:625.60px;font-size:12.7px;line-height:17px;color:#262626;font-weight:400;">Máy móc, thiết bị phục vụ công...</div>
<div class="t" style="left:1737px;width:74px;overflow:hidden;top:625.60px;font-size:12.7px;line-height:17px;color:#262626;font-weight:400;white-space:nowrap;">Giảng đường B</div>
<svg class="r" style="left:1845px;top:624px" width="18" height="18" viewBox="0 0 18 18"><g fill="none" stroke="#e24e25"><path d="M5.7 6.4V5.2A3 3 0 0 1 8.7 2.2H9.3A3 3 0 0 1 12.3 5.2V6.4" stroke-width="1.15"/><path d="M2.2 6.4H15.8" stroke-width="1.3"/><path d="M3.8 6.4V13.5A2.6 2.6 0 0 0 6.4 16.1H11.6A2.6 2.6 0 0 0 14.2 13.5V6.4" stroke-width="1.15"/><path d="M7.5 9.3V12.5M10.5 9.3V12.5" stroke-width="1.15" stroke-linecap="round"/></g></svg>
<div class="r" style="left:898px;top:414px;width:128px;height:241px;background:#fcfcfc;"></div>
<div class="r" style="left:898px;top:410.2px;width:128px;height:26px;filter:blur(4.2px);"><span style="position:absolute;left:2px;top:9px;width:17px;height:10px;background:#b4b4b4;border-radius:4px"></span><span style="position:absolute;left:26px;top:9px;width:28px;height:11px;background:#afafaf;border-radius:4px"></span><span style="position:absolute;left:61px;top:9px;width:28px;height:11px;background:#b2b2b2;border-radius:4px"></span><span style="position:absolute;left:95px;top:9px;width:19px;height:10px;background:#b8b8b8;border-radius:4px"></span></div>
<div class="r" style="left:898px;top:445.5px;width:128px;height:26px;filter:blur(4.2px);"><span style="position:absolute;left:2px;top:9px;width:17px;height:10px;background:#b4b4b4;border-radius:4px"></span><span style="position:absolute;left:26px;top:9px;width:28px;height:11px;background:#afafaf;border-radius:4px"></span><span style="position:absolute;left:61px;top:9px;width:28px;height:11px;background:#b2b2b2;border-radius:4px"></span><span style="position:absolute;left:95px;top:9px;width:19px;height:10px;background:#b8b8b8;border-radius:4px"></span></div>
<div class="r" style="left:898px;top:480.5px;width:128px;height:26px;filter:blur(4.2px);"><span style="position:absolute;left:2px;top:9px;width:17px;height:10px;background:#b4b4b4;border-radius:4px"></span><span style="position:absolute;left:26px;top:9px;width:28px;height:11px;background:#afafaf;border-radius:4px"></span><span style="position:absolute;left:61px;top:9px;width:28px;height:11px;background:#b2b2b2;border-radius:4px"></span><span style="position:absolute;left:95px;top:9px;width:19px;height:10px;background:#b8b8b8;border-radius:4px"></span></div>
<div class="r" style="left:898px;top:515.5px;width:128px;height:26px;filter:blur(4.2px);"><span style="position:absolute;left:2px;top:9px;width:17px;height:10px;background:#b4b4b4;border-radius:4px"></span><span style="position:absolute;left:26px;top:9px;width:28px;height:11px;background:#afafaf;border-radius:4px"></span><span style="position:absolute;left:61px;top:9px;width:28px;height:11px;background:#b2b2b2;border-radius:4px"></span><span style="position:absolute;left:95px;top:9px;width:19px;height:10px;background:#b8b8b8;border-radius:4px"></span></div>
<div class="r" style="left:898px;top:550.5px;width:128px;height:26px;filter:blur(4.2px);"><span style="position:absolute;left:2px;top:9px;width:17px;height:10px;background:#b4b4b4;border-radius:4px"></span><span style="position:absolute;left:26px;top:9px;width:28px;height:11px;background:#afafaf;border-radius:4px"></span><span style="position:absolute;left:61px;top:9px;width:28px;height:11px;background:#b2b2b2;border-radius:4px"></span><span style="position:absolute;left:95px;top:9px;width:19px;height:10px;background:#b8b8b8;border-radius:4px"></span></div>
<div class="r" style="left:898px;top:585.5px;width:128px;height:26px;filter:blur(4.2px);"><span style="position:absolute;left:2px;top:9px;width:17px;height:10px;background:#b4b4b4;border-radius:4px"></span><span style="position:absolute;left:26px;top:9px;width:28px;height:11px;background:#afafaf;border-radius:4px"></span><span style="position:absolute;left:61px;top:9px;width:28px;height:11px;background:#b2b2b2;border-radius:4px"></span><span style="position:absolute;left:95px;top:9px;width:19px;height:10px;background:#b8b8b8;border-radius:4px"></span></div>
<div class="r" style="left:898px;top:619.5px;width:128px;height:26px;filter:blur(4.2px);"><span style="position:absolute;left:2px;top:9px;width:17px;height:10px;background:#b4b4b4;border-radius:4px"></span><span style="position:absolute;left:26px;top:9px;width:28px;height:11px;background:#afafaf;border-radius:4px"></span><span style="position:absolute;left:61px;top:9px;width:28px;height:11px;background:#b2b2b2;border-radius:4px"></span><span style="position:absolute;left:95px;top:9px;width:19px;height:10px;background:#b8b8b8;border-radius:4px"></span></div>
<div class="r" style="left:898px;top:434px;width:128px;height:16px;background:linear-gradient(rgba(231,234,252,0),rgba(236,239,251,0.9) 45%,rgba(252,252,252,0));"></div>
<div class="r" style="left:13px;top:825px;width:1888px;height:1px;background:#e1e1e1;"></div>
<div class="r" style="left:13px;top:826px;width:1888px;height:34px;background:#f4f4f4;"></div>
<div class="r" style="left:62px;top:826px;width:1px;height:34px;background:#e1e1e1;"></div>
<div class="r" style="left:192px;top:826px;width:1px;height:34px;background:#e1e1e1;"></div>
<div class="r" style="left:422px;top:826px;width:1px;height:34px;background:#e1e1e1;"></div>
<div class="r" style="left:534px;top:826px;width:1px;height:34px;background:#e1e1e1;"></div>
<div class="r" style="left:784px;top:826px;width:1px;height:34px;background:#e1e1e1;"></div>
<div class="r" style="left:1026px;top:826px;width:1px;height:34px;background:#e1e1e1;"></div>
<div class="r" style="left:1176px;top:826px;width:1px;height:34px;background:#e1e1e1;"></div>
<div class="r" style="left:1326px;top:826px;width:1px;height:34px;background:#e1e1e1;"></div>
<div class="r" style="left:1526px;top:826px;width:1px;height:34px;background:#e1e1e1;"></div>
<div class="r" style="left:1726px;top:826px;width:1px;height:34px;background:#e1e1e1;"></div>
<div class="r" style="left:1811px;top:826px;width:1px;height:34px;background:#e1e1e1;"></div>
<div class="r" style="left:13px;top:860px;width:1888px;height:8px;background:#f0f0f0;"></div>
<div class="r" style="left:13px;top:860px;width:903px;height:8px;background:#d3d3d3;"></div>
<div class="r" style="left:13px;top:867px;width:1888px;height:1px;background:#e2e2e2;"></div>
<div class="r" style="left:1901px;top:345px;width:14px;height:90px;background:#2c52ec;border-radius:8px 0 0 8px;box-shadow:0 2px 4px rgba(0,0,0,0.12);"></div>
<svg class="r" style="left:1904px;top:384px" width="10" height="12" viewBox="0 0 10 12"><path d="M7 2L3.5 6L7 10" fill="none" stroke="#fff" stroke-width="1.6"/></svg>
<div class="r" style="left:1900px;top:872px;width:15px;height:76px;background:linear-gradient(90deg,rgba(0,0,0,0),rgba(0,0,0,0.16));-webkit-mask-image:linear-gradient(rgba(0,0,0,0),#000 35%,#000 55%,rgba(0,0,0,0));"></div>
<div class="t" style="left:23px;top:879.10px;font-size:12.7px;line-height:17px;color:#262626;font-weight:400;">Tổng số: <b>7</b> bản ghi</div>
<div class="t" style="left:1633px;top:878.93px;font-size:13.2px;line-height:17px;color:#262626;font-weight:400;">Số dòng/trang</div>
<div class="t" style="left:1727px;top:879.10px;font-size:12.7px;line-height:17px;color:#262626;font-weight:400;">20</div>
<svg class="r" style="left:1753px;top:881px" width="14" height="10" viewBox="0 0 14 10"><path d="M2.5 2.5L7 7L11.5 2.5" fill="none" stroke="#111" stroke-width="1.8"/></svg>
<div class="t" style="left:1800px;top:880.69px;font-size:11px;line-height:14px;color:#999;font-weight:400;">&lt;</div>
<div class="t" style="left:1814px;top:879.10px;font-size:12.7px;line-height:17px;color:#262626;font-weight:400;">Trang</div>
<div class="t" style="left:1864.5px;top:879.10px;font-size:12.7px;line-height:17px;color:#262626;font-weight:700;">1</div>
<div class="t" style="left:1886px;top:880.69px;font-size:11px;line-height:14px;color:#999;font-weight:400;">&gt;</div>
<div class="r" style="left:2px;top:905px;width:1913px;height:1px;background:#d9dce3;"></div>
<div class="r" style="left:1419px;top:915px;width:62px;height:32px;background:#fff;border:1px solid #d3d6dc;border-radius:4px;box-sizing:border-box;"></div>
<div class="t" style="left:1150px;width:600px;text-align:center;top:923.91px;font-size:11.8px;line-height:15px;color:#262626;font-weight:400;-webkit-text-stroke:0.3px #262626;">Đóng</div>
<div class="r" style="left:1489px;top:915px;width:218px;height:32px;background:#fff;border:1px solid #2a52e6;border-radius:4px;box-sizing:border-box;"></div>
<svg class="r" style="left:1500px;top:920px" width="20" height="20" viewBox="0 0 20 20"><path d="M9 17.3H7.4A3.5 3.5 0 0 1 3.9 13.8V6.4A3.5 3.5 0 0 1 7.4 2.9H12.6A3.5 3.5 0 0 1 16.1 6.4V9.4" fill="none" stroke="#3454e6" stroke-width="1.8"/><rect x="7" y="6.1" width="3" height="1.8" fill="#3454e6"/><rect x="7" y="9.1" width="6" height="1.7" fill="#3454e6"/><path d="M12.7 12.4L13.5 14.1L15.2 14.9L13.5 15.7L12.7 17.4L11.9 15.7L10.2 14.9L11.9 14.1Z" fill="#3454e6"/><circle cx="17.3" cy="11.9" r="0.8" fill="#3454e6" opacity="0.3"/><circle cx="17.3" cy="18" r="0.8" fill="#3454e6" opacity="0.3"/></svg>
<div class="t" style="left:1530.5px;top:923.91px;font-size:11.8px;line-height:15px;color:#2a52e6;font-weight:400;-webkit-text-stroke:0.3px #2a52e6;">Kiểm tra tính hợp lệ bằng AVA</div>
<div class="r" style="left:1708px;top:907px;width:50px;height:44px;border:4px solid #ff3a3f;box-sizing:border-box;"></div>
<div class="r" style="left:1715px;top:915px;width:39px;height:32px;background:#f1f2f4;border-radius:4px 0 0 4px;"></div>
<div class="r" style="left:1723px;top:919px;width:24px;height:24px;background:#fff;border-radius:50%;"></div>
<svg class="r" style="left:1727px;top:923px" width="16" height="16" viewBox="0 0 16 16"><rect x="4" y="1.5" width="11" height="13" rx="2" fill="none" stroke="#2f55e8" stroke-width="1.3"/><path d="M9.5 1.5V14.5M9.5 5H15M9.5 8H15M9.5 11H15M4 5H9.5" stroke="#2f55e8" stroke-width="1.1"/><rect x="1" y="5.8" width="10" height="9" rx="0.8" fill="#29a845"/><path d="M3.7 7.8L8.3 13.2M8.3 7.8L3.7 13.2" stroke="#fff" stroke-width="1.5"/></svg>
<div class="r" style="left:1763px;top:915px;width:66px;height:32px;background:#f1f2f4;border-radius:4px;"></div>
<svg class="r" style="left:1778px;top:921px" width="21" height="21" viewBox="0 0 21 21"><path d="M6 5V3.8A2 2 0 0 1 8 1.8H13A2 2 0 0 1 15 3.8V5" fill="none" stroke="#3d3d3d" stroke-width="1.5"/><path d="M5.8 15.2H5A3.2 3.2 0 0 1 1.8 12V8.2A3.2 3.2 0 0 1 5 5H16A3.2 3.2 0 0 1 19.2 8.2V12A3.2 3.2 0 0 1 16 15.2H15.2" fill="none" stroke="#3d3d3d" stroke-width="1.5"/><rect x="5.8" y="11.2" width="9.4" height="8.2" rx="2" fill="none" stroke="#3d3d3d" stroke-width="1.5"/><path d="M14 8H16" stroke="#3d3d3d" stroke-width="1.2"/></svg>
<div class="t" style="left:1803.5px;top:923.17px;font-size:12.5px;line-height:16px;color:#a8a8a8;font-weight:400;">In</div>
<div class="r" style="left:1837px;top:915px;width:64px;height:32px;background:#2d55e8;border-radius:4px;"></div>
<div class="t" style="left:1569px;width:600px;text-align:center;top:923.27px;font-size:12.2px;line-height:16px;color:#fff;font-weight:700;">Lưu</div>
</body></html>
